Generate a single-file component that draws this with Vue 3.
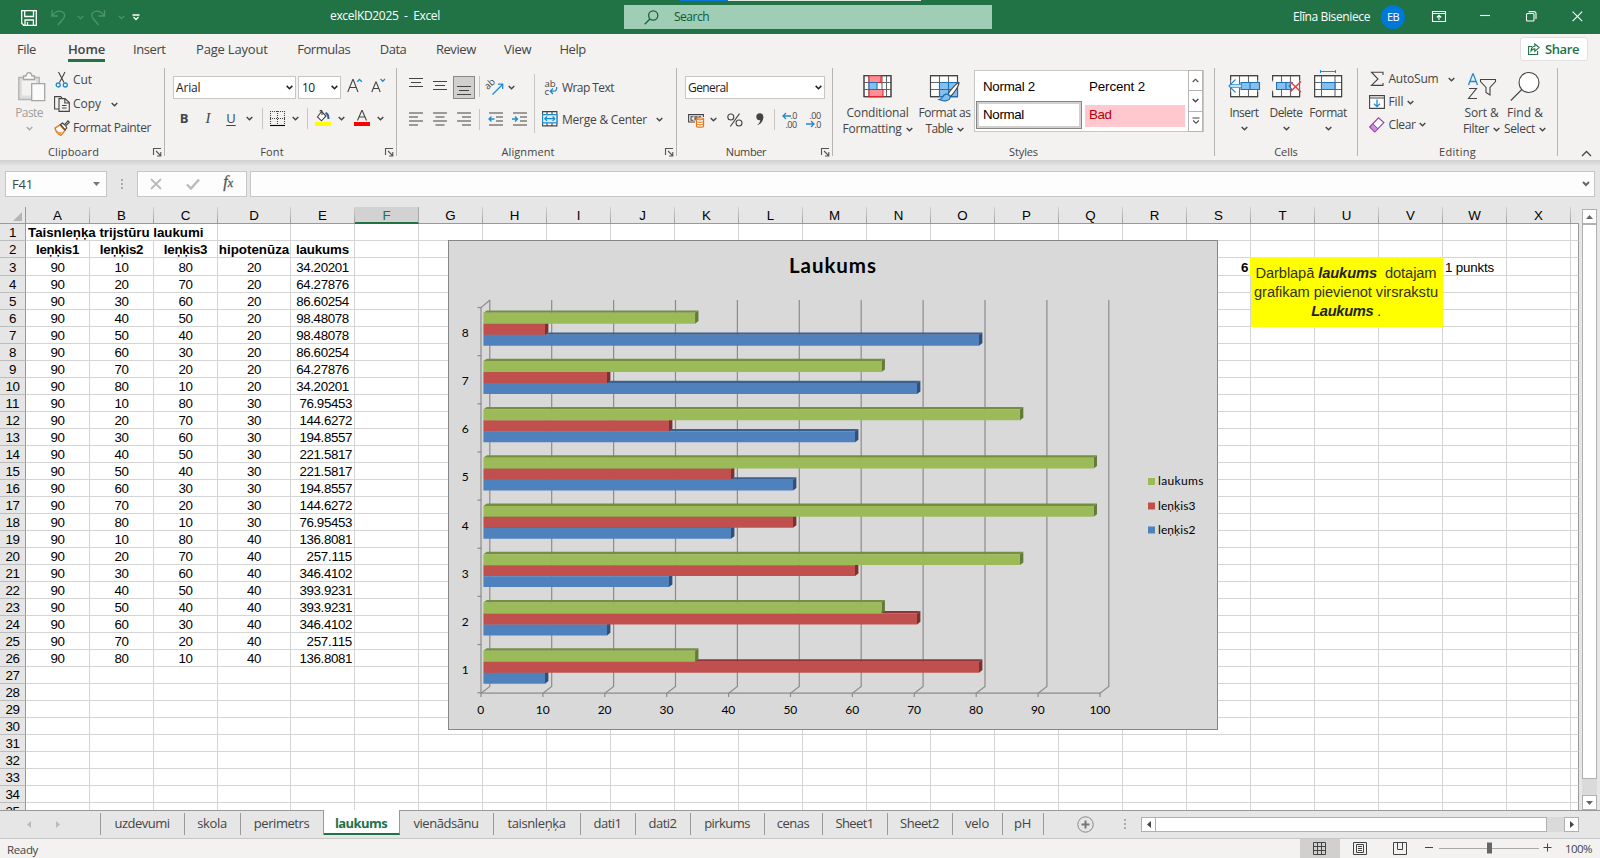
<script setup>
import { h } from 'vue'

// Tracks a label so that it occupies exactly the given width.
const vFit = {
  mounted(el, { value }) {
    const natural = el.getBoundingClientRect().width
    const count = el.textContent.trim().length
    if (count) el.style.letterSpacing = ((value - natural) / count).toFixed(3) + 'px'
  },
}

const Chev = () =>
  h('svg', { class: 'chev', viewBox: '0 0 7 5' }, [h('path', { d: 'M.7 .9 3.5 3.7 6.3 .9' })])
const Launcher = () =>
  h('svg', { class: 'launcher', viewBox: '0 0 9 9' }, [
    h('path', { d: 'M.5 7V.5H8M3 3l4.5 4.5M7.8 4v4H4' }),
  ])

const menu = [
  ['File', 19], ['Home', 37], ['Insert', 32.5], ['Page Layout', 71.5], ['Formulas', 53],
  ['Data', 26.5], ['Review', 40], ['View', 27.5], ['Help', 26.5],
]

const docTitle = 'excelKD2025  -  Excel'
const letters = 'ABCDEFGHIJKLMNOPQRSTUVWX'.split('')
const area = [
  34.20201, 64.27876, 86.60254, 98.48078, 98.48078, 86.60254, 64.27876, 34.20201,
  76.95453, 144.6272, 194.8557, 221.5817, 221.5817, 194.8557, 144.6272, 76.95453,
  136.8081, 257.115, 346.4102, 393.9231, 393.9231, 346.4102, 257.115, 136.8081,
]

function contentOf(row, col) {
  if (row === 2) {
    return {
      A: { t: 'leņķis1', fit: 43, k: 'bold mid' }, B: { t: 'leņķis2', fit: 43.5, k: 'bold mid' },
      C: { t: 'leņķis3', fit: 43.5, k: 'bold mid' }, D: { t: 'hipotenūza', fit: 70.5, k: 'bold mid' },
      E: { t: 'laukums', fit: 53, k: 'bold mid' },
    }[col]
  }
  if (row >= 3 && row <= 26) {
    const i = row - 3
    const step = (i % 8) + 1
    if (col === 'A') return { t: '90', fit: 14, k: 'mid' }
    if (col === 'B') return { t: String(step * 10), fit: 14, k: 'mid' }
    if (col === 'C') return { t: String(90 - step * 10), fit: 14, k: 'mid' }
    if (col === 'D') return { t: String(20 + Math.floor(i / 8) * 10), fit: 14, k: 'mid' }
    if (col === 'E') {
      const t = String(area[i])
      return { t, fit: t.length * 7 - 3.5, k: i < 8 ? 'mid' : 'end' }
    }
  }
  if (row === 3 && col === 'S') return { t: '6', fit: 7, k: 'bold end' }
  if (row === 3 && col === 'W') return { t: '1 punkts', fit: 49, k: '' }
  return null
}

const cells = []
for (let r = 1; r <= 35; r++) {
  cells.push({ id: 'r' + r, t: String(r), k: 'rowhead', fit: r > 9 ? 14 : 7 })
  for (const c of letters) {
    if (r === 1 && (c === 'B' || c === 'C')) continue
    if (r >= 3 && r <= 6 && 'TUV'.includes(c)) {
      if (r === 3 && c === 'T') cells.push({ id: 'note', k: 'note', note: true })
      continue
    }
    if (r === 1 && c === 'A') {
      cells.push({ id: 'A1', t: 'Taisnleņķa trijstūru laukumi', fit: 175.5, k: 'bold wide' })
      continue
    }
    const v = contentOf(r, c)
    cells.push({ id: c + r, t: v ? v.t : '', fit: v ? v.fit : 0, k: v ? v.k : '' })
  }
  cells.push({ id: 'Y' + r, t: '', k: 'last' })
}

const series = [
  { name: 'blue', values: [10, 20, 30, 40, 50, 60, 70, 80] },
  { name: 'red', values: [80, 70, 60, 50, 40, 30, 20, 10] },
  { name: 'green', values: area.slice(0, 8) },
]
const bars = []
for (let c = 7; c >= 0; c--) {
  series.forEach((s, i) => {
    const x = 483.4
    const y = 312.8 + (7 - c) * 48.28 + (2 - i) * 11
    const r = 483 + s.values[c] * 6.2
    const b = y + 10.9
    bars.push({
      id: s.name + c, name: s.name,
      front: `M${x} ${y}H${r}V${b}H${x}Z`,
      top: `M${x} ${y}L${x + 3.4} ${y - 2.4}H${r + 3.4}L${r} ${y}Z`,
      side: `M${r} ${y}L${r + 3.4} ${y - 2.4}V${b - 2.6}L${r} ${b}Z`,
    })
  })
}
const ticks = Array.from({ length: 11 }, (_, i) => ({ v: i * 10, x: 481.5 + i * 61.9 }))
const cats = Array.from({ length: 8 }, (_, i) => ({ n: 8 - i, y: 337 + i * 48.15 }))

const sheets = [
  ['uzdevumi', 84, 55], ['skola', 56, 29.5], ['perimetrs', 83, 55.5], ['laukums', 76, 52],
  ['vienādsānu', 94, 65], ['taisnleņķa', 87, 58], ['dati1', 55, 28], ['dati2', 55, 28],
  ['pirkums', 74, 45.5], ['cenas', 58, 32.5], ['Sheet1', 65, 38], ['Sheet2', 65, 39],
  ['velo', 50, 24], ['pH', 41, 17],
]
</script>

<template>
  <div class="app">
    <header class="title">
      <div class="stripe"><i></i><b></b></div>
      <div class="quick">
        <svg width="16" height="16" viewBox="0 0 16 16" class="w"><path d="M.7.7h14.6v14.6H2.7l-2-2zM3.7.9v5.6h8.8V.9M4 15.2V10h8.4v5.2M6.5 15v-3" /></svg>
        <svg width="16" height="17" viewBox="0 0 16 17" class="dim"><path d="M1 1v6h6M1.3 6.6C4 3 7.500 1.500 10.500 2.500c4 1.300 4 5 1.500 7.500L7 16" /></svg>
        <Chev class="dim" />
        <svg width="16" height="17" viewBox="0 0 16 17" class="dim"><path d="M14.500 1v6h-6M14.200 6.600C11.500 3 8 1.500 5 2.500 1 3.800 1 7.500 3.500 10L8.500 16" /></svg>
        <Chev class="dim" />
        <svg width="8" height="7" viewBox="0 0 8 7" class="w"><path d="M.5 1h7M1.500 3 4 5.500 6.500 3" /></svg>
      </div>
      <div class="doc"><span v-fit="110" class="pre">{{ docTitle }}</span></div>
      <div class="search">
        <svg width="15" height="15" viewBox="0 0 15 15"><circle cx="9.200" cy="5.500" r="4.600" /><path d="M6 9 .7 14.300" /></svg>
        <span v-fit="35">Search</span>
      </div>
      <div class="user"><span v-fit="77">Elīna Biseniece</span><b class="avatar"><span v-fit="12">EB</span></b></div>
      <div class="win">
        <svg width="14" height="11" viewBox="0 0 14 11"><path d="M.5.5h13v10H.5zM.5 2.500h13M7 9V4.500M4.800 6.500 7 4.300l2.200 2.200" /></svg>
        <svg width="10" height="11" viewBox="0 0 10 11"><path d="M0 4.500h10" /></svg>
        <svg width="11" height="11" viewBox="0 0 11 11"><rect x=".5" y="2.500" width="7.500" height="7.500" rx="1" /><path d="M2.500.6H8A2 2 0 0 1 10 2.600V8" /></svg>
        <svg width="11" height="11" viewBox="0 0 11 11"><path d="m.6.6 9.600 9.600m0-9.600L.6 10.200" /></svg>
      </div>
    </header>

    <nav class="menu">
      <div class="menu-items">
        <span v-for="[t, w] in menu" :key="t" v-fit="w" :class="{ on: t === 'Home', wide1: t === 'Insert', near: t === 'View' || t === 'Help' }">{{ t }}</span>
      </div>
      <button class="share">
        <svg width="12" height="12" viewBox="0 0 12 12"><path d="M4 3.500H.6v8h9V8M6.800 1v2.300C4.500 3.500 3.200 5 3 8c1-1.500 2.200-2.100 3.800-2.100V8.200l4.300-3.600z" /></svg>
        <span v-fit="34">Share</span>
      </button>
    </nav>

    <section class="ribbon">
      <div class="group clip">
        <div class="body">
          <div class="big paste">
            <svg width="28" height="30" viewBox="0 0 28 30">
              <path d="M.8 5.500h20.400v22H.8z" class="pfill" />
              <path d="M4 8.500h14v15H4z" fill="#f3f2f1" />
              <path d="M5.500 7.500V4H8c.3-2 1.500-3.300 3-3.300s2.700 1.300 3 3.300h2.500v3.500z" class="pw" />
              <path d="M13.700 11.700h13v17h-13z" class="pw" />
            </svg>
            <span v-fit="27.500">Paste</span><Chev class="dis" />
          </div>
          <div class="rows3">
            <div><svg width="16" height="16" viewBox="0 0 16 16" class="ic"><path d="M4.500 0 10 10.500M11 0 5.500 10.500" /><g class="bl"><circle cx="4.200" cy="13" r="2" /><circle cx="11.300" cy="13" r="2" /></g></svg><span v-fit="19">Cut</span></div>
            <div><svg width="16" height="16" viewBox="0 0 16 16" class="ic"><path d="M5 13H.6V.6h6L8 2M5 2.600h6l4.300 4v8.800H5zM10.800 3v4h4.300M8 9.500h4.500M8 12h4.500" /></svg><span v-fit="28">Copy</span><Chev class="cgap" /></div>
            <div>
              <svg width="16" height="16" viewBox="0 0 16 16"><path d="M1 8.200 6 5l5 5.500-4 4.800c-3-1-5-3-6-7.100z" fill="#fff" stroke="#e07a1c" stroke-width="1.400" /><path d="M2.500 10 5 12l3-.5-1.500 3.200c-2-1-3.400-2.500-4-4.700z" fill="#f0a050" /><path d="m6.500 4.500 2-1.500 2 1.800L14 .8l1.300 1.400-3.600 3.600 1 2-1.600 2z" fill="#fff" stroke="#444" stroke-width="1.200" /></svg>
              <span v-fit="78">Format Painter</span>
            </div>
          </div>
        </div>
        <footer><span v-fit="51">Clipboard</span><Launcher /></footer>
      </div>

      <div class="group font">
        <div class="body col">
          <div class="line l1">
            <div class="select fam"><span v-fit="24.500">Arial</span><Chev class="blk" /></div>
            <div class="select siz"><span v-fit="12.500">10</span><Chev class="blk" /></div>
            <svg width="16" height="15" viewBox="0 0 16 15" class="ic grow"><path d="M.8 14 5.800 1.500h.4L11 14M2.600 9.500h6.700" /><path class="bl" d="m10.200 3.800 2.300-2.300 2.300 2.300" /></svg>
            <svg width="15" height="15" viewBox="0 0 15 15" class="ic shrink"><path d="M.8 14 4.800 4h.4L9.200 14M2.300 10.500h5.400" /><path class="bl" d="m9.500 1 2.300 2.300L14 1" /></svg>
          </div>
          <div class="line l2 fontgrid">
            <b class="g">B</b><i class="g ser">I</i><span class="g und">U</span><Chev /><hr />
            <svg width="15" height="15" viewBox="0 0 15 15" class="ic"><path stroke-dasharray="1 1" d="M0 .5h15M.5 0v14M14.500 0v14M7.500 0v14M0 7.500h15" /><path d="M0 14.500h15" class="k" /></svg>
            <Chev /><hr />
            <svg width="16" height="16" viewBox="0 0 16 16" class="ic"><path d="M6.500 1.500 11 6l-4.500 4.800L2.500 7z" fill="#fff" /><path d="M7 5V1.500c0-1.500-2-1.500-2 0" /><path d="M10.500 3c2 .5 3 2 3 6" stroke="#2b5c94" stroke-width="2" /><path d="M0 12h16v4H0z" fill="#ff0" stroke="none" /></svg>
            <Chev />
            <svg width="16" height="16" viewBox="0 0 16 16" class="ic"><path d="M3.500 10.500 7.800.6h.4l4.300 9.900M5 7h6" /><path d="M0 12h16v4H0z" fill="#f00" stroke="none" /></svg>
            <Chev />
          </div>
        </div>
        <footer><span v-fit="23.500">Font</span><Launcher /></footer>
      </div>

      <div class="group align">
        <div class="body">
          <div class="col">
            <div class="line l1 algrid">
              <svg width="14" height="14" viewBox="0 0 14 14" class="ic up"><path d="M0 1.500h14M2 5.500h10M0 9.500h14" /></svg>
              <svg width="14" height="14" viewBox="0 0 14 14" class="ic"><path d="M0 2.500h14M2 6.500h10M0 10.500h14" /></svg>
              <span class="pressed"><svg width="14" height="14" viewBox="0 0 14 14" class="ic"><path d="M0 5.500h14M2 9.500h10M0 13.500h14" /></svg></span>
              <hr />
              <svg width="16" height="16" viewBox="0 0 16 16" class="ic"><text x="-.5" y="8" transform="rotate(-42 4 8)" class="ab">ab</text><path class="bl" d="m5.500 15.500 10-10M11 5.200h4.700v4.700" /></svg>
              <Chev />
            </div>
            <div class="line l2 algrid">
              <svg width="14" height="14" viewBox="0 0 14 14" class="ic"><path d="M0 1h14M0 5h9M0 9h14M0 13h9" /></svg>
              <svg width="14" height="14" viewBox="0 0 14 14" class="ic"><path d="M0 1h14M2.500 5h9M0 9h14M2.500 13h9" /></svg>
              <svg width="14" height="14" viewBox="0 0 14 14" class="ic"><path d="M0 1h14M5 5h9M0 9h14M5 13h9" /></svg>
              <hr />
              <svg width="15" height="14" viewBox="0 0 15 14" class="ic"><path d="M1 1h14M8 5h7M8 9h7M1 13h14" /><path class="bl" d="M6.500 7H1M3.500 4.500 1 7l2.500 2.500" /></svg>
              <svg width="15" height="14" viewBox="0 0 15 14" class="ic"><path d="M1 1h14M8 5h7M8 9h7M1 13h14" /><path class="bl" d="M0 7h5.500M3 4.500 5.500 7 3 9.500" /></svg>
            </div>
          </div>
          <hr class="tall" />
          <div class="col wraps">
            <div class="line l1">
              <svg width="16" height="16" viewBox="0 0 16 16" class="ic"><text x="2.500" y="7.500" class="ab">ab</text><text x="2.500" y="15.500" class="ab">c</text><path class="bl" d="M14.500 8c.8 2.500-.8 4.200-3 4.200H8.500M11 9.500l-2.800 2.700 2.800 2.800" /></svg>
              <span v-fit="52">Wrap Text</span>
            </div>
            <div class="line l2">
              <svg width="16" height="16" viewBox="0 0 16 16" class="ic"><path d="M.6.6h14.300v14.300H.6zM5 .6v3M10 .6v3M5 12v3M10 12v3" fill="#fff" /><path d="M.6 3.600h14.300v8.300H.6z" fill="#dcecf8" stroke="#1e8bcd" /><path class="bl" d="M2.800 7.700h10M5 5.500 2.800 7.700 5 9.900M10.600 5.500l2.200 2.200-2.200 2.200" /></svg>
              <span v-fit="85" class="dn">Merge &amp; Center</span><Chev class="mgap" />
            </div>
          </div>
        </div>
        <footer><span v-fit="53">Alignment</span><Launcher /></footer>
      </div>

      <div class="group num">
        <div class="body col">
          <div class="line l1"><div class="select gen"><span v-fit="40">General</span><Chev class="blk" /></div></div>
          <div class="line l2 numgrid">
            <svg width="17" height="16" viewBox="0 0 17 16" class="ic"><path d="M7 10H.6V2.600h14.800V5" /><path d="M5.500 4.800H3v3.400h2.500M7 8.500V4.800h2v2H7M13 4.800h-2v3" /><path d="M8.500 6.800c0-1.300 7-1.300 7 0v7.400c0 1.300-7 1.300-7 0z" fill="#fff" stroke="#e07a1c" stroke-width="1.300" /><path d="M8.500 7c1 1.200 6 1.200 7 0M8.500 9.500c1 1.200 6 1.200 7 0M8.500 12c1 1.200 6 1.200 7 0" stroke="#e07a1c" /></svg>
            <Chev />
            <svg width="16" height="14" viewBox="0 0 16 14" class="ic"><circle cx="3.800" cy="4" r="3" /><circle cx="12" cy="10" r="3" /><path d="M12.500.6 3.300 13.500" /></svg>
            <svg width="8" height="13" viewBox="0 0 8 13"><circle cx="3.800" cy="3.800" r="3.500" fill="#444" /><path d="M7.300 3.500C7.500 8 5 11 1 12.300c2.500-2 3.500-4 3.300-6z" fill="#444" /></svg>
            <hr />
            <svg width="17" height="16" viewBox="0 0 17 16" class="ic"><path class="bl" d="M9 4H1M4 1 1 4l3 3" /><text x="8.500" y="7" class="dg">.0</text><text x="3.500" y="15.500" class="dg">.00</text></svg>
            <svg width="17" height="16" viewBox="0 0 17 16" class="ic"><text x="3.500" y="7" class="dg">.00</text><text x="8.500" y="15.500" class="dg">.0</text><path class="bl" d="M0 12h8M5 9l3 3-3 3" /></svg>
          </div>
        </div>
        <footer><span v-fit="40.500">Number</span><Launcher /></footer>
      </div>

      <div class="group styles">
        <div class="body">
          <div class="big cf">
            <svg width="30" height="30" viewBox="0 0 30 30" class="ic"><path d="M1 3.600h27v21H1zM1 10.500h27M1 17.500h27M6 3.600v21M19 3.600v21M23.500 3.600v21" fill="#fff" stroke="#666" /><path d="M1 3.600h27v21H1z" /><path d="M6 3.600h12v6.900H6zM6 17.500h14v7.100H6z" fill="#ff8f94" stroke="#d9262c" /><path d="M6 10.500h8v7H6z" fill="#84bfee" stroke="#1f6fb5" /></svg>
            <span v-fit="62">Conditional</span><div class="ln"><span v-fit="59">Formatting</span><Chev /></div>
          </div>
          <div class="big ft">
            <svg width="32" height="30" viewBox="0 0 32 30" class="ic"><path d="M1.500 3.600h27v21h-27zM1.500 10.500h27M1.500 17.500h9M10.500 3.600v21M19.500 3.600v7" fill="#fff" stroke="#666" /><path d="M1.500 3.600h27v21h-27z" /><path d="M10.500 10.500h18v14h-18zM19.500 10.500v14M10.500 17.500h18" fill="#84bfee" stroke="#1f6fb5" /><path d="M30 10.500c-3 1-9 8-11 11.500l2.500 2.500c3-3 8.500-10.500 8.500-14z" fill="#fff" /><path d="M18.800 22.300c-2.500-.5-4.500 1-5.300 3-.6 1.300-2 2-3.500 2.200 5 2.500 11 1.500 11.300-2.800z" fill="#84bfee" stroke="#1f6fb5" /></svg>
            <span v-fit="52">Format as</span><div class="ln"><span v-fit="27">Table</span><Chev /></div>
          </div>
          <div class="gallery">
            <div class="opts">
              <div><span v-fit="52">Normal 2</span></div><div class="p2"><span v-fit="56">Percent 2</span></div>
              <div class="sel"><span v-fit="41">Normal</span></div><div class="bad"><span v-fit="22.500">Bad</span></div>
            </div>
            <div class="arrows">
              <span><svg width="7" height="5" viewBox="0 0 7 5" class="ic"><path d="M.7 4 3.500 1.200 6.300 4" /></svg></span>
              <span><Chev /></span>
              <span><svg width="8" height="8" viewBox="0 0 8 8" class="ic"><path d="M.5 1h7M1.200 3.500 4 6.300 6.800 3.500" /></svg></span>
            </div>
          </div>
        </div>
        <footer><span v-fit="29">Styles</span></footer>
      </div>

      <div class="group cellsg">
        <div class="body">
          <div class="big">
            <svg width="34" height="30" viewBox="0 0 34 30" class="ic"><path d="M3.600 3.600h27v21h-27zM12.500 3.600v21M21.500 3.600v21" fill="#fff" stroke="#666" /><path d="M3.600 8V3.600h27V8M3.600 20v4.600h27V20" /><path d="M14 10.500h18.500v7H14zM23 10.500v7" fill="#84bfee" stroke="#1f6fb5" /><path d="M2 14h12" stroke="#fff" stroke-width="4" /><path d="M8.500 7.500 2 14l6.500 6.500M2.500 12.700H15M2.500 15.300H15" stroke="#1e8bcd" /></svg>
            <span v-fit="29">Insert</span><Chev />
          </div>
          <div class="big">
            <svg width="32" height="30" viewBox="0 0 32 30" class="ic"><path d="M2.600 3.600h27v21h-27zM11.500 3.600v21M20.500 3.600v21" fill="#fff" stroke="#666" /><path d="M2.600 8V3.600h27V8M2.600 20v4.600h27V20" /><path d="M2 9.500h3v9H2z" fill="#f3f2f1" stroke="none" /><path d="M6.500 10.500h9.500v7H6.500zM16 10.500h6l-3 3.500 3 3.500h-6z" fill="#84bfee" stroke="#1f6fb5" /><path d="m20 9.500 11 10.500M31 9.500 20 20" stroke="#e8383d" stroke-width="1.400" /></svg>
            <span v-fit="33">Delete</span><Chev />
          </div>
          <div class="big">
            <svg width="30" height="30" viewBox="0 0 30 30" class="ic"><path d="M1.600 3.600h27v21h-27zM8.500 3.600v21M22 3.600v21M1.600 10.500h27M1.600 17.500h27" fill="#fff" stroke="#666" /><path d="M1.600 3.600h27v21h-27z" /><path d="M8.500 10.500H22v7H8.500z" fill="#84bfee" stroke="#1f6fb5" /><path d="M7.500-2v3M22.500-2v3M7.500-.5h15" stroke="#1e8bcd" /></svg>
            <span v-fit="37.500">Format</span><Chev />
          </div>
        </div>
        <footer><span v-fit="23.500">Cells</span></footer>
      </div>

      <div class="group edit">
        <div class="body">
          <div class="rows3 erows">
            <div><svg width="16" height="16" viewBox="0 0 16 16" class="ic"><path d="M14 4V1.200H2.500L9 8l-6.500 6.400H14V12" /></svg><span v-fit="50">AutoSum</span><Chev class="agap" /></div>
            <div><svg width="16" height="14" viewBox="0 0 16 14" class="ic"><path d="M.6.6h14.800v12.800H.6zM.6 3h14.800" fill="#fff" /><path class="bl" d="M8 4.500v7M5 8.800l3 2.900 3-2.900" /></svg><span v-fit="15">Fill</span><Chev class="sgap" /></div>
            <div><svg width="16" height="16" viewBox="0 0 16 16"><path d="m.8 10 8.700-9.200 5.300 4.800-9 9.300z" fill="#fff" stroke="#9b3fa8" stroke-width="1.200" /><path d="m.8 10 3-3.200 5.200 5-3.200 3.200z" fill="#cf8fd8" stroke="#9b3fa8" /></svg><span v-fit="27">Clear</span><Chev class="sgap" /></div>
          </div>
          <div class="big sort">
            <svg width="30" height="30" viewBox="0 0 30 30" class="ic"><path class="bl" d="M1.500 13 5.800 1.800h.4L10.500 13M3 9.500h6" /><path d="M2 16.500h7.500L1.500 26.500H10M13.500 7.500h15v2L23 15.500V23l-4-2.500v-5L13.500 9.500z" /></svg>
            <span v-fit="34">Sort &amp;</span><div class="ln"><span v-fit="26">Filter</span><Chev /></div>
          </div>
          <div class="big find">
            <svg width="30" height="30" viewBox="0 0 30 30" class="ic"><circle cx="19" cy="10.500" r="10" fill="#fff" /><path d="M11.800 17.500.8 28.500" /></svg>
            <span v-fit="36">Find &amp;</span><div class="ln"><span v-fit="31">Select</span><Chev /></div>
          </div>
        </div>
        <footer><span v-fit="37">Editing</span></footer>
      </div>
      <svg class="collapse" width="11" height="7" viewBox="0 0 11 7"><path d="M1 6 5.500 1.500 10 6" /></svg>
    </section>

    <section class="fbar">
      <div class="name"><span v-fit="21">F41</span><svg width="7" height="4" viewBox="0 0 7 4"><path d="M0 0h7L3.500 4z" fill="#777" /></svg></div>
      <div class="dots"><i></i><i></i><i></i></div>
      <div class="fbtn">
        <svg width="12" height="12" viewBox="0 0 12 12"><path d="m1 1 10 10M11 1 1 11" stroke="#bbb" stroke-width="1.800" fill="none" /></svg>
        <svg width="14" height="12" viewBox="0 0 14 12"><path d="m1 6.500 4 4L13 1.500" stroke="#bbb" stroke-width="2.400" fill="none" /></svg>
        <span class="fx">f<small>x</small></span>
      </div>
      <div class="finput"><svg width="8" height="6" viewBox="0 0 8 6"><path d="m1 1 3 3 3-3" stroke="#666" stroke-width="2" fill="none" /></svg></div>
    </section>

    <main class="work">
      <div class="sheet">
        <div class="heads">
          <div class="corner"><svg width="9" height="9" viewBox="0 0 9 9"><path d="M9 0v9H0z" fill="#b5b5b5" /></svg></div>
          <div v-for="l in letters" :key="l" class="head" :class="{ cur: l === 'F' }">{{ l }}</div>
          <div class="head end0"></div>
        </div>
        <div class="grid">
          <div v-for="c in cells" :key="c.id" class="cell" :class="c.k">
            <template v-if="c.note">
              <p><span v-fit="181" class="pre">{{ 'Darblapā ' }}<b>laukums</b>{{ '  dotajam' }}</span></p>
              <p><span v-fit="184">grafikam pievienot virsrakstu</span></p>
              <p><span v-fit="69.500"><b>Laukums</b> .</span></p>
            </template>
            <span v-else-if="c.t" v-fit="c.fit">{{ c.t }}</span>
          </div>
        </div>
        <svg class="chart" width="770" height="490" viewBox="448 240 770 490">
          <rect x="448.500" y="240.500" width="769" height="489" fill="#d9d9d9" stroke="#868686" />
          <text x="789" y="272.500" class="ct" textLength="87">Laukums</text>
          <g class="ax">
            <path v-for="t in ticks" :key="'g' + t.v" :d="`M${t.x + 8.300} 300V686.500L${t.x - 0.500} 693.200V697`" />
            <path d="M490 300 481 307.500V693.200H1101" />
            <path v-for="i in 9" :key="'c' + i" :d="`M477.500 ${307.500 + (i - 1) * 48.150}h4`" />
          </g>
          <g v-for="b in bars" :key="b.id" :class="b.name">
            <path :d="b.top" class="top" /><path :d="b.side" class="side" /><path :d="b.front" class="front" />
          </g>
          <text v-for="t in ticks" :key="t.v" :x="t.x - 0.700" y="713.800" text-anchor="middle" class="cl" :textLength="String(t.v).length * 6.900">{{ t.v }}</text>
          <text v-for="c in cats" :key="c.n" x="465.300" :y="c.y" text-anchor="middle" class="cl">{{ c.n }}</text>
          <path d="M1148 478h7v7h-7z" class="lg" /><path d="M1148 502.500h7v7h-7z" class="lr" /><path d="M1148 526.500h7v7h-7z" class="lb" />
          <text x="1158" y="485" class="cl" textLength="45.500">laukums</text>
          <text x="1158" y="509.500" class="cl" textLength="37.500">leņķis3</text>
          <text x="1158" y="534" class="cl" textLength="37.500">leņķis2</text>
        </svg>
      </div>
      <div class="vscroll">
        <span class="sb"><svg width="7" height="4" viewBox="0 0 7 4"><path d="M0 4h7L3.500 0z" fill="#666" /></svg></span>
        <span class="thumb"></span><span class="track"></span>
        <span class="sb"><svg width="7" height="4" viewBox="0 0 7 4"><path d="M0 0h7L3.500 4z" fill="#666" /></svg></span>
      </div>
    </main>

    <section class="tabs">
      <div class="navs">
        <svg width="4" height="7" viewBox="0 0 4 7"><path d="M4 0v7L0 3.500z" fill="#bbb" /></svg>
        <svg width="4" height="7" viewBox="0 0 4 7"><path d="M0 0v7l4-3.500z" fill="#bbb" /></svg>
      </div>
      <div v-for="([t, w, f], i) in sheets" :key="t" class="tab" :class="{ act: i === 3, before: i === 2 }" :style="{ width: w + 'px' }"><span v-fit="f">{{ t }}</span></div>
      <svg class="plus" width="17" height="17" viewBox="0 0 17 17"><circle cx="8.500" cy="8.500" r="7.700" fill="none" stroke="#888" /><path d="M8.500 4.500v8M4.500 8.500h8" stroke="#777" stroke-width="2" /></svg>
      <div class="dots tdots"><i></i><i></i><i></i></div>
      <div class="hscroll">
        <span class="sb"><svg width="4" height="7" viewBox="0 0 4 7"><path d="M4 0v7L0 3.500z" fill="#444" /></svg></span>
        <span class="thumb"></span><span class="track"></span>
        <span class="sb"><svg width="4" height="7" viewBox="0 0 4 7"><path d="M0 0v7l4-3.500z" fill="#444" /></svg></span>
      </div>
    </section>

    <footer class="status">
      <div class="ready"><span v-fit="31">Ready</span></div>
      <div class="views">
        <span class="von"><svg width="13" height="13" viewBox="0 0 13 13"><path d="M.5.5h12v12H.5zM4.500.5v12M8.500.5v12M.5 4.500h12M.5 8.500h12" /></svg></span>
        <span><svg width="14" height="13" viewBox="0 0 14 13"><path d="M.5.5h13v12H.5zM3.500 2.500h7v8h-7zM5 4.500h4M5 6.500h4M5 8.500h4" /></svg></span>
        <span><svg width="14" height="13" viewBox="0 0 14 13"><path d="M.5.5h13v12H.5zM4.500.5v7h5v-7M9.500 7.500V.5" /></svg></span>
      </div>
      <svg class="zoomer" width="126" height="12" viewBox="0 0 126 12"><path d="M0 5.500h8M118.500 5.500h8M122.500 1.500v8" stroke="#444" /><path d="M14 6.500h100" stroke="#aaa" /><path d="M62 .5h5v11h-5z" fill="#666" /></svg>
      <span v-fit="27" class="pct">100%</span>
    </footer>
  </div>
</template>

<style>
body { overflow: hidden; }
</style>

<style scoped>
* { box-sizing: border-box; }
.app { width: 1600px; height: 858px; display: flex; flex-direction: column; background: #e6e6e6; color: #444; font: 12px/16px "Open Sans", "Noto Sans", sans-serif; overflow: hidden; }
span { display: inline-block; white-space: nowrap; }
.pre { white-space: pre; }
svg { flex: none; display: block; overflow: visible; }
hr { width: 1px; height: 21px; border: 0; margin: 0; background: #c8c6c4; }
.chev { width: 7px; height: 5px; fill: none; stroke: #444; stroke-width: 1.4; }
.chev.dis { stroke: #aaa; }
.chev.blk { stroke: #222; stroke-width: 1.6; }
.ic { fill: none; stroke: #444; stroke-width: 1.1; }
.ic .bl { stroke: #1e8bcd; stroke-width: 1.3; }
.ic .k { stroke: #000; }
.ab { font: 9.5px "Open Sans", sans-serif; fill: #444; stroke: none; }
.dg { font: 9px "Open Sans", sans-serif; fill: #444; stroke: none; letter-spacing: -.5px; }

.title { position: relative; height: 34px; background: #217346; display: flex; align-items: center; color: #fff; flex: none; }
.title svg { fill: none; stroke: #fff; stroke-width: 1.1; }
.stripe { position: absolute; top: 0; left: 680px; width: 241px; height: 1px; display: flex; }
.stripe i { width: 48px; background: #0a78d6; }
.stripe b { flex: 1; background: #dfe8e2; }
.quick { width: 320px; padding-left: 21px; display: grid; grid-template-columns: 30px 20px 19px 20px 22px 8px; align-items: center; padding-top: 1px; }
.quick .chev { margin-left: 0; justify-self: center; }
.title .dim { stroke: #4f9470; stroke-width: 1.3; }
.quick .w { stroke-width: 1.3; }
.doc { width: 304px; padding-left: 10px; margin-top: -2px; }
.search { width: 368px; height: 24px; background: #9fcdb5; color: #0f5a31; display: flex; align-items: center; padding-left: 20px; gap: 15px; }
.title .search svg { stroke: #17633a; stroke-width: 1.3; }
.user { width: 412px; display: flex; align-items: center; justify-content: flex-end; gap: 11px; }
.avatar { width: 24px; height: 24px; border-radius: 50%; background: #0078d7; display: grid; place-items: center; font-weight: 400; font-size: 11px; }
.win { flex: 1; padding: 0 17px 2px 28px; display: grid; grid-template-columns: 48px 46px 46px 11px; align-items: center; }
.user { position: relative; left: 1px; }

.menu { height: 34px; background: #f3f2f1; display: flex; justify-content: space-between; flex: none; }
.menu-items { display: flex; gap: 29.6px; padding-left: 17px; padding-top: 6px; font-size: 13px; line-height: 19px; }
.menu-items span { height: 22px; }
.menu-items .on { font-weight: 600; border-bottom: 3px solid #217346; height: 22px; margin: 0 -1.6px 0 2.4px; }
.menu-items .wide1 { margin-right: 1px; }
.menu-items .near { margin-left: -1.6px; }
.share { margin: 3px 12px 0 0; width: 68px; height: 24px; background: #fff; border: 1px solid #e1dfdd; border-radius: 3px; display: flex; align-items: center; gap: 5px; padding: 0 0 0 7px; font: 600 13px/16px "Open Sans", sans-serif; color: #217346; }
.share svg { fill: none; stroke: #217346; stroke-width: 1.1; }

.ribbon { height: 92px; background: #f3f2f1; display: flex; flex: none; position: relative; }
.group { height: 88px; border-right: 1px solid #b7b5b3; display: flex; flex-direction: column; }
.body { height: 76px; display: flex; flex: none; }
.col { display: flex; flex-direction: column; }
.group > footer { height: 16px; display: flex; justify-content: center; align-items: center; font-size: 11px; position: relative; flex: none; }
.launcher { position: absolute; right: 2px; top: 4px; width: 9px; height: 9px; fill: none; stroke: #555; stroke-width: 1.1; }
.clip { width: 165px; } .font { width: 232px; } .align { width: 280px; } .num { width: 156px; }
.styles { width: 382px; } .cellsg { width: 143px; } .edit { width: 200px; }
.clip footer, .font footer, .align footer, .num footer { padding-right: 17px; }
.line { display: flex; align-items: center; }
.l1 { height: 38px; align-items: flex-start; padding-top: 8px; }
.l2 { height: 24px; }
.big { display: flex; flex-direction: column; align-items: center; padding-top: 4px; }
.big > span { margin-top: 3px; }
.big .ln { display: flex; align-items: center; gap: 4px; }
.big > .chev { margin-top: 5px; }
.paste { width: 53px; padding-left: 5px; color: #a19f9d; }
.paste > svg:first-child { margin-left: 5px; }
.pfill { fill: #dedede; stroke: #b5b5b5; stroke-width: 1.5; }
.pw { fill: #fafafa; stroke: #a5a5a5; stroke-width: 1.3; }
.rows3 > div { height: 24px; display: flex; align-items: center; }
.rows3 span { margin-left: 3.500px; }
.cgap { margin-left: 10px; }
.clip .rows3 > div { padding-left: .5px; }
.erows { padding-left: 11px; width: 106px; }
.erows > div { height: 22.800px; }
.agap { margin-left: 9px; } .sgap { margin-left: 3px; }
.select { height: 23px; background: #fff; border: 1px solid #c8c6c4; display: flex; align-items: center; justify-content: space-between; padding: 0 2px; color: #222; }
.select span { margin-top: 1px; }
.fam { width: 123px; margin-left: 8px; } .siz { width: 43px; margin-left: 2px; } .gen { width: 140px; margin-left: 8px; }
.siz { padding-left: 3px; }
.grow { margin: 2px 0 0 6px; } .shrink { margin: 2px 0 0 8px; }
.fontgrid { display: grid; grid-template-columns: 22px 26px 20px 16px 10px 21px 15px 8px 24px 12px 30px 6px; padding-left: 8px; justify-items: center; }
.g { font-size: 13px; line-height: 16px; }
.ser { font-family: "Liberation Serif", serif; font-size: 15px; }
.und { text-decoration: underline; text-underline-offset: 2px; }
.algrid { display: grid; grid-template-columns: 24px 24px 24px 7px 24px 24px; padding-left: 7px; justify-items: center; width: 137px; }
.l1.algrid > svg { margin-top: 3px; } .l1.algrid > .up { margin-top: 1px; } .l1.algrid > .chev { margin: 9px 16px 0 0; }
.l2.algrid { padding-top: 2px; }
.pressed { width: 22px; height: 23px; background: #d2d0ce; border: 1px solid #8a8886; display: grid; place-items: center; }
.tall { height: 59px; margin-top: 6px; }
.wraps { padding-left: 7px; }
.wraps span { margin-left: 4px; }
.wraps .l1 { padding-top: 11px; }
.wraps .l1 span { margin-top: 1px; }
.wraps .l2 { padding-top: 2px; }
.wraps .dn { margin-top: 2px; }
.mgap { margin-left: 9px; }
.numgrid { display: grid; grid-template-columns: 22px 13px 30px 19px 11px 20px 28px; padding-left: 8px; padding-top: 3px; justify-items: center; }
.cf { width: 77px; margin-left: 6px; } .ft { width: 57px; }
.gallery { width: 230px; height: 62px; margin: 2px 0 0 1px; background: #fff; border: 1px solid #c8c6c4; display: flex; }
.opts { width: 214px; display: grid; grid-template-columns: 108px 102px; grid-template-rows: 30px 29px; padding-left: 1px; font: 13.33px/16px "Liberation Sans", Arial, sans-serif; color: #000; align-items: center; }
.opts > div { padding-left: 7px; display: flex; align-items: center; }
.opts > div:not(.sel):not(.bad) { padding-top: 1px; }
.opts .sel { border: 1px solid #868686; box-shadow: inset 0 0 0 2px #d2d0ce; height: 28px; width: 106px; padding: 0 0 1px 6px; margin-top: -1px; }
.opts .bad { background: #ffc7ce; color: #b0000c; height: 22px; margin: 0 0 0 1px; width: 100px; padding-left: 4px; padding-bottom: 1px; }
.opts .p2 { padding-left: 5px; }
.arrows { width: 15px; margin: -1px -1px; display: flex; flex-direction: column; }
.arrows span { width: 15px; flex: 1; border: 1px solid #b7b5b3; display: grid; place-items: center; }
.arrows span + span { margin-top: -1px; }
.cellsg .body { padding-left: 8px; }
.cellsg .big { width: 42px; }
.sort { width: 35px; } .find { width: 52px; }
.cellsg .chev { margin-top: 5px; }
.collapse { position: absolute; right: 8px; bottom: 3px; fill: none; stroke: #444; stroke-width: 1.3; }

.fbar { height: 47px; padding: 11px 5px 0; display: flex; flex: none; background: linear-gradient(#cfcfcf, #e6e6e6 6px); }
.fbar > div:not(.dots) { height: 26px; background: #fdfdfd; border: 1px solid #c6c6c6; display: flex; align-items: center; }
.name { width: 102px; justify-content: space-between; padding: 0 6px; font-size: 13px; }
.dots { width: 30px; display: flex; flex-direction: column; align-items: center; gap: 2px; padding-top: 8px; }
.dots i { width: 2px; height: 2px; background: #aaa; }
.fbtn { width: 110px; justify-content: space-between; padding: 0 13px 0 12px; }
.fx { font: italic 16px/18px "Liberation Serif", serif; color: #555; margin-top: -3px; -webkit-text-stroke: .3px #555; }
.fx small { font-size: 12px; }
.finput { flex: 1; margin-left: 3px; justify-content: flex-end; padding-right: 4px; }

.work { height: 604px; display: flex; flex: none; font: 13.33px/17px "Liberation Sans", Arial, sans-serif; color: #000; border-bottom: 1px solid #999; }
.sheet { width: 1579px; height: 603px; position: relative; overflow: hidden; background: #fff; }
.heads, .grid { display: grid; grid-template-columns: 26px repeat(3, 64px) 73px repeat(20, 64px) 8px; }
.heads { height: 17px; background: #e6e6e6; border-bottom: 1px solid #999; font-size: 13.33px; }
.head { text-align: center; height: 16px; line-height: 18px; border-right: 1px solid; border-image: linear-gradient(#d6d6d6, #9a9a9a) 1; }
.head.cur { background: #d2d2d2; color: #217346; border-bottom: 2px solid #217346; border-image: none; border-right: 1px solid #aaa; height: 17px; }
.head.end0 { border: 0; }
.corner { border-right: 1px solid #999; padding: 5px 0 0 13px; height: 16px; }
.grid { grid-template-rows: 17px 17px 18px repeat(32, 17px); }
.cell { border-right: 1px solid #d4d4d4; border-bottom: 1px solid #d4d4d4; display: flex; align-items: flex-end; padding: 0 2px; line-height: 16px; white-space: nowrap; min-width: 0; }
.cell > span { margin-bottom: -1px; line-height: 17px; }
.mid { justify-content: center; padding: 0; }
.end { justify-content: flex-end; }
.bold { font-weight: 700; }
.wide { grid-column: span 3; }
.last { border-right: 1px solid #999; }
.rowhead { background: #e6e6e6; border-right-color: #999; border-bottom-color: #bdbdbd; justify-content: center; padding: 0; font-size: 13.33px; }
.note { grid-column: span 3; grid-row: span 4; margin: -1px 0 0 -1px; background: #ff0; border: 0; flex-direction: column; align-items: center; padding: 6.5px 1px 0 0; font-size: 14.67px; color: #33331a; }
.note p { margin: 0; height: 19px; line-height: 19px; }
.note > p > span { line-height: 19px; }
.note b { font-style: italic; color: #222; }
.chart { position: absolute; left: 448px; top: 33px; }
.ct { font: 700 20.5px Lato, sans-serif; fill: #000; }
.cl { font: 12px Lato, "Open Sans", sans-serif; fill: #000; }
.ax path { fill: none; stroke: #8c8c8c; stroke-width: 1.2; }
.blue .front, .lb { fill: #4f81bd; } .blue .top { fill: #3a6190; } .blue .side { fill: #30507a; }
.red .front, .lr { fill: #c0504d; } .red .top { fill: #8c3836; } .red .side { fill: #7b312f; }
.green .front, .lg { fill: #9bbb59; } .green .top { fill: #748e42; } .green .side { fill: #647b38; }

.vscroll { width: 15px; margin-left: 3px; padding-top: 2px; display: flex; flex-direction: column; }
.sb { background: #fff; border: 1px solid #b0b0b0; width: 15px; height: 15px; display: grid; place-items: center; flex: none; }
.thumb { background: #fff; border: 1px solid #b0b0b0; }
.track { background: #dadada; }
.vscroll .thumb { height: 555px; } .vscroll .track { flex: 1; }

.tabs { height: 28px; display: flex; flex: none; border-bottom: 1px solid #c6c6c6; font-size: 13px; }
.navs { width: 101px; display: flex; gap: 25px; align-items: center; padding: 0 0 1px 27px; border-right: 1px solid #999; border-image: linear-gradient(transparent 3px, #999 3px, #999 23px, transparent 23px) 1; }
.tab { height: 27px; display: flex; align-items: center; justify-content: center; padding: 0 1px 3px 0; border-right: 1px solid; border-image: linear-gradient(transparent 3px, #999 3px, #999 23px, transparent 23px) 1; flex: none; }
.tab.before { border-image: none; border-color: #999; height: 24px; padding-bottom: 0; }
.tab.act { background: #fff; color: #217346; font-weight: 700; height: 25px; margin-top: -1px; border-image: none; border-right: 1px solid #999; border-bottom: 2px solid #217346; padding: 3px 1px 0 0; }
.plus { margin: 5px 0 0 33px; }
.tdots { width: 62px; padding-top: 8px; margin-right: -14px; }
.hscroll { display: flex; margin-top: 6px; margin-left: -1px; height: 15px; width: 438px; }
.hscroll .thumb { width: 392px; height: 15px; margin-left: -1px; } .hscroll .track { flex: 1; }
.status { height: 19px; background: #f3f2f1; display: flex; align-items: center; flex: none; font-size: 11.5px; }
.ready { padding: 3px 0 0 7px; width: 1300px; flex: none; }
.views { display: flex; align-self: stretch; }
.views span { width: 40px; display: grid; place-items: center; padding-right: 1px; }
.views .von { background: #d2d0ce; }
.views svg { fill: none; stroke: #444; }
.zoomer { margin-left: 5px; margin-top: -1px; }
.pct { margin: 1px 0 0 14px; }
</style>
